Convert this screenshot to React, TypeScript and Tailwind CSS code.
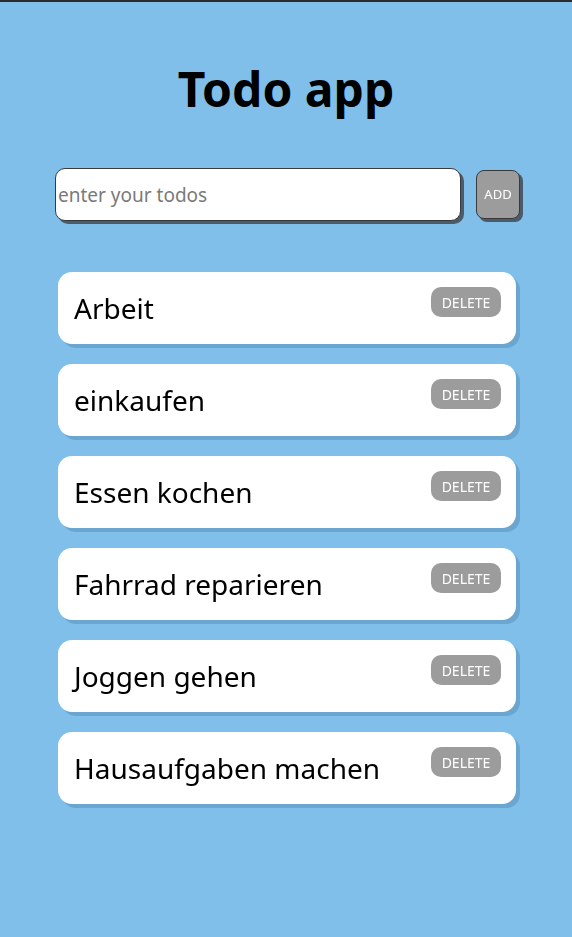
import { useState } from "react";

const comic = "font-['Comic_Sans_MS','Noto_Sans',sans-serif]";

export default function App() {
  const [todos, setTodos] = useState<string[]>([
    "Arbeit",
    "einkaufen",
    "Essen kochen",
    "Fahrrad reparieren",
    "Joggen gehen",
    "Hausaufgaben machen",
  ]);
  const [text, setText] = useState("");

  function addTodo() {
    if (!text.trim()) return;
    setTodos((prev) => [...prev, text.trim()]);
    setText("");
  }

  function removeTodo(index: number) {
    setTodos((prev) => prev.filter((_, i) => i !== index));
  }

  return (
    <div className={`min-h-[937px] bg-[#7fbfea] border-t-2 border-[#2b2b2b] ${comic}`}>
      <div className="flex flex-col items-center pt-[51px]">
        <h1 className="text-[48px] font-bold leading-[72px] text-black">Todo app</h1>
      </div>

      <div className="flex items-center mt-[43px] pl-[55px]">
        <input
          value={text}
          onChange={(e) => setText(e.target.value)}
          placeholder="enter your todos"
          autoFocus
          className="w-[406px] h-[53px] rounded-[10px] border border-[#3a3a3a] bg-white px-[2px] text-[19px] text-black placeholder:text-[#7a7a7a] shadow-[3px_3px_0_#4a5b6b] outline-none"
        />
        <button
          onClick={addTodo}
          className="ml-[15px] w-[44px] h-[49px] rounded-[8px] border border-[#3a3a3a] bg-[#9c9c9c] text-[13px] text-white shadow-[3px_3px_0_#4a5b6b]"
        >
          ADD
        </button>
      </div>

      <ul className="flex flex-col gap-[20px] mt-[51px] pl-[58px]">
        {todos.map((todo, i) => (
          <li
            key={i}
            className="w-[458px] h-[72px] rounded-[14px] bg-white shadow-[4px_4px_0_#6aa6cf] flex justify-between pl-[16px] pr-[15px]"
          >
            <span className="text-[28px] leading-[72px] text-black">{todo}</span>
            <button
              onClick={() => removeTodo(i)}
              className="mt-[15px] w-[70px] h-[30px] rounded-[10px] bg-[#9c9c9c] text-white text-[14px] font-['Noto_Sans',sans-serif]"
            >
              DELETE
            </button>
          </li>
        ))}
      </ul>
    </div>
  );
}
